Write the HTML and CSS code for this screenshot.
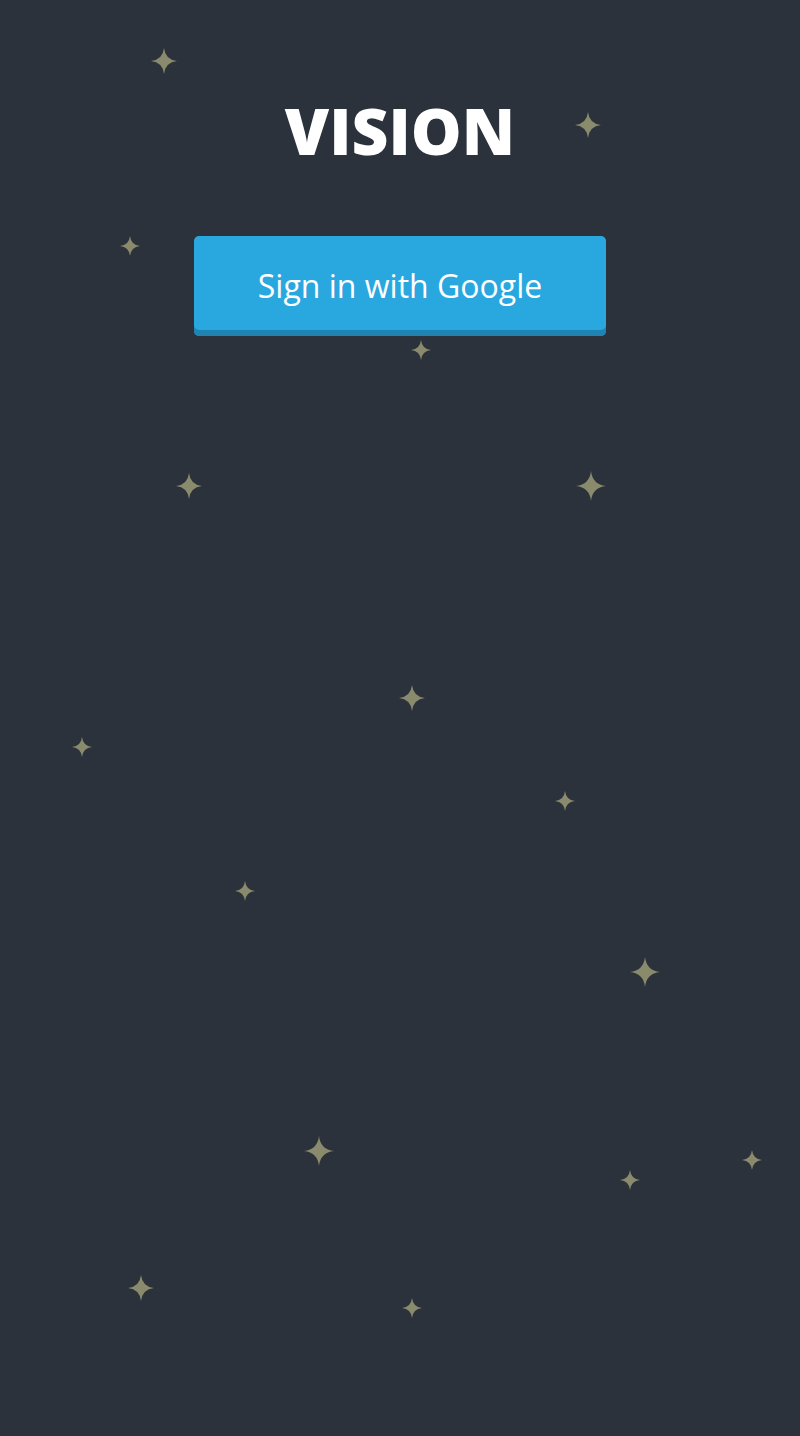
FILE: index.html
```html
<!DOCTYPE html>
<html>
<head>
<meta charset="utf-8">
<link rel="stylesheet" href="styles.css">
</head>
<body>
<div class="sky">
  <svg class="star" style="left:151px;top:48px;width:26px;height:26px" viewBox="0 0 20 20"><path d="M10 0 Q11 9 20 10 Q11 11 10 20 Q9 11 0 10 Q9 9 10 0Z"/></svg>
  <svg class="star" style="left:575px;top:112px;width:26px;height:26px" viewBox="0 0 20 20"><path d="M10 0 Q11 9 20 10 Q11 11 10 20 Q9 11 0 10 Q9 9 10 0Z"/></svg>
  <svg class="star" style="left:120px;top:236px;width:20px;height:20px" viewBox="0 0 20 20"><path d="M10 0 Q11 9 20 10 Q11 11 10 20 Q9 11 0 10 Q9 9 10 0Z"/></svg>
  <svg class="star" style="left:411px;top:340px;width:20px;height:20px" viewBox="0 0 20 20"><path d="M10 0 Q11 9 20 10 Q11 11 10 20 Q9 11 0 10 Q9 9 10 0Z"/></svg>
  <svg class="star" style="left:176px;top:473px;width:26px;height:26px" viewBox="0 0 20 20"><path d="M10 0 Q11 9 20 10 Q11 11 10 20 Q9 11 0 10 Q9 9 10 0Z"/></svg>
  <svg class="star" style="left:576px;top:471px;width:30px;height:30px" viewBox="0 0 20 20"><path d="M10 0 Q11 9 20 10 Q11 11 10 20 Q9 11 0 10 Q9 9 10 0Z"/></svg>
  <svg class="star" style="left:399px;top:685px;width:26px;height:26px" viewBox="0 0 20 20"><path d="M10 0 Q11 9 20 10 Q11 11 10 20 Q9 11 0 10 Q9 9 10 0Z"/></svg>
  <svg class="star" style="left:72px;top:737px;width:20px;height:20px" viewBox="0 0 20 20"><path d="M10 0 Q11 9 20 10 Q11 11 10 20 Q9 11 0 10 Q9 9 10 0Z"/></svg>
  <svg class="star" style="left:555px;top:791px;width:20px;height:20px" viewBox="0 0 20 20"><path d="M10 0 Q11 9 20 10 Q11 11 10 20 Q9 11 0 10 Q9 9 10 0Z"/></svg>
  <svg class="star" style="left:235px;top:881px;width:20px;height:20px" viewBox="0 0 20 20"><path d="M10 0 Q11 9 20 10 Q11 11 10 20 Q9 11 0 10 Q9 9 10 0Z"/></svg>
  <svg class="star" style="left:630px;top:957px;width:30px;height:30px" viewBox="0 0 20 20"><path d="M10 0 Q11 9 20 10 Q11 11 10 20 Q9 11 0 10 Q9 9 10 0Z"/></svg>
  <svg class="star" style="left:304px;top:1136px;width:30px;height:30px" viewBox="0 0 20 20"><path d="M10 0 Q11 9 20 10 Q11 11 10 20 Q9 11 0 10 Q9 9 10 0Z"/></svg>
  <svg class="star" style="left:620px;top:1170px;width:20px;height:20px" viewBox="0 0 20 20"><path d="M10 0 Q11 9 20 10 Q11 11 10 20 Q9 11 0 10 Q9 9 10 0Z"/></svg>
  <svg class="star" style="left:742px;top:1150px;width:20px;height:20px" viewBox="0 0 20 20"><path d="M10 0 Q11 9 20 10 Q11 11 10 20 Q9 11 0 10 Q9 9 10 0Z"/></svg>
  <svg class="star" style="left:128px;top:1275px;width:26px;height:26px" viewBox="0 0 20 20"><path d="M10 0 Q11 9 20 10 Q11 11 10 20 Q9 11 0 10 Q9 9 10 0Z"/></svg>
  <svg class="star" style="left:402px;top:1298px;width:20px;height:20px" viewBox="0 0 20 20"><path d="M10 0 Q11 9 20 10 Q11 11 10 20 Q9 11 0 10 Q9 9 10 0Z"/></svg>
</div>
<main class="content">
  <h1 class="title">VISION</h1>
  <button class="google-btn">Sign in with Google</button>
</main>
</body>
</html>
```
FILE: styles.css
```css
html, body {
  margin: 0;
  padding: 0;
}
body {
  background: #2b323c;
  min-height: 1436px;
  position: relative;
  font-family: "Open Sans", "Liberation Sans", sans-serif;
  overflow: hidden;
}
.sky {
  position: absolute;
  inset: 0;
}
.star {
  position: absolute;
  fill: #8a8a6c;
}
.content {
  position: relative;
  display: flex;
  flex-direction: column;
  align-items: center;
  padding-top: 86px;
}
.title {
  margin: 0;
  color: #ffffff;
  font-weight: 800;
  font-size: 64px;
  line-height: 90px;
  letter-spacing: 0;
}
.google-btn {
  margin-top: 60px;
  width: 412px;
  height: 100px;
  border: none;
  border-radius: 5px;
  background: #29a8e0;
  box-shadow: inset 0 -6px 0 #2084b3;
  color: #ffffff;
  font-family: "Open Sans", "Liberation Sans", sans-serif;
  font-size: 32px;
  padding: 0 0 2px;
  cursor: pointer;
}
```
